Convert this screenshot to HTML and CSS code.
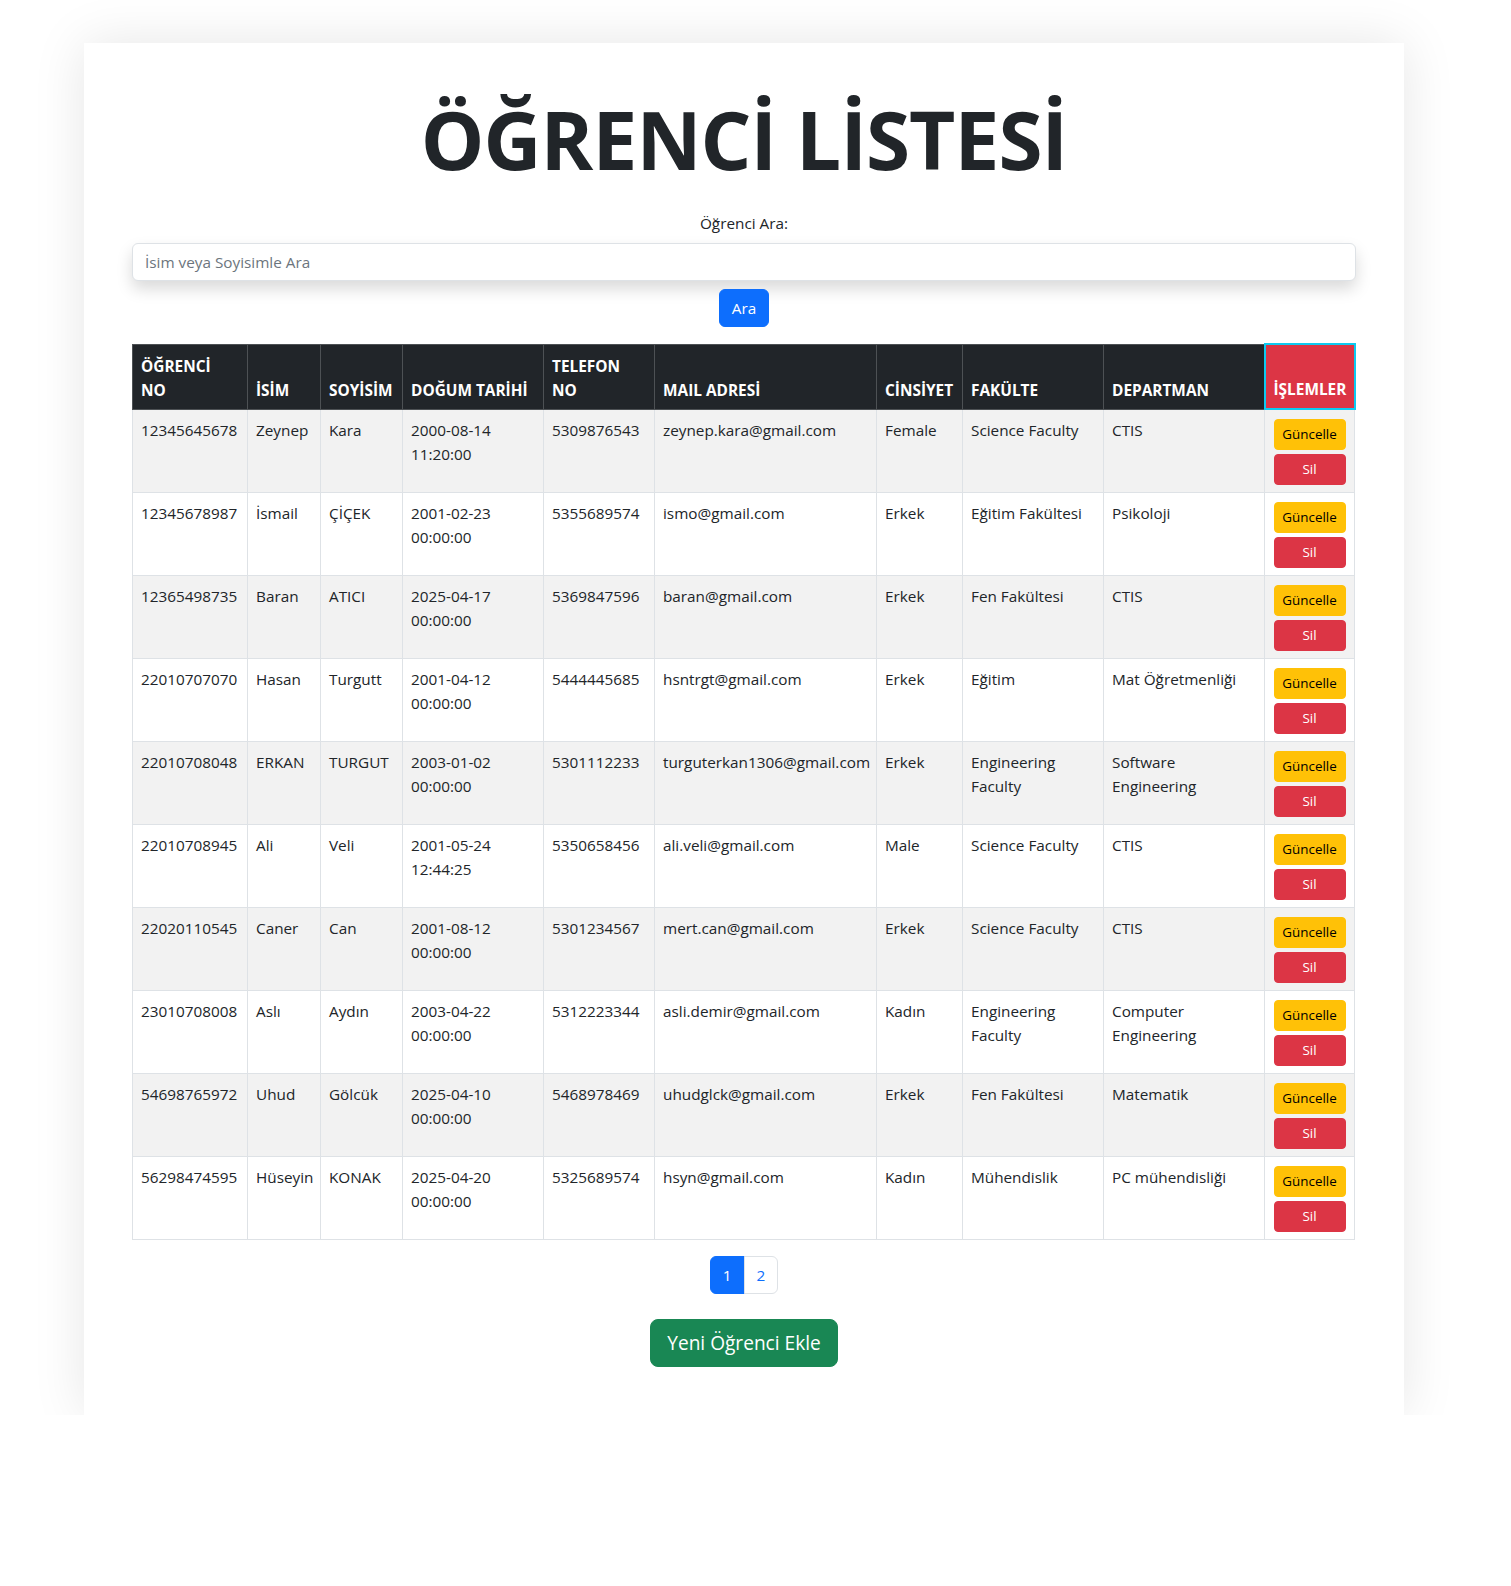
FILE: index.html
```html
<!DOCTYPE html>
<html lang="tr">
<head>
<meta charset="utf-8">
<title>Öğrenci Listesi</title>
<link rel="stylesheet" href="styles.css">
</head>
<body>
<div class="page">
  <main class="container">
    <h1 class="title">ÖĞRENCİ LİSTESİ</h1>

    <form class="search">
      <label class="search-label" for="q">Öğrenci Ara:</label>
      <input id="q" class="search-input" type="text" placeholder="İsim veya Soyisimle Ara">
      <div class="search-actions">
        <button type="button" class="btn btn-primary">Ara</button>
      </div>
    </form>

    <table class="students">
      <colgroup>
        <col class="c-no"><col class="c-name"><col class="c-surname"><col class="c-date"><col class="c-phone">
        <col class="c-mail"><col class="c-gender"><col class="c-faculty"><col class="c-dept"><col class="c-actions">
      </colgroup>
      <thead>
        <tr>
          <th>ÖĞRENCİ<br>NO</th>
          <th>İSİM</th>
          <th>SOYİSİM</th>
          <th>DOĞUM TARİHİ</th>
          <th>TELEFON<br>NO</th>
          <th>MAIL ADRESİ</th>
          <th>CİNSİYET</th>
          <th>FAKÜLTE</th>
          <th>DEPARTMAN</th>
          <th class="th-actions">İŞLEMLER</th>
        </tr>
      </thead>
      <tbody>
        <tr><td>12345645678</td><td>Zeynep</td><td>Kara</td><td>2000-08-14 11:20:00</td><td>5309876543</td><td>zeynep.kara@gmail.com</td><td>Female</td><td>Science Faculty</td><td>CTIS</td>
          <td class="td-actions"><div class="btn-stack"><button class="btn-sm btn-warning">Güncelle</button><button class="btn-sm btn-danger">Sil</button></div></td></tr>
        <tr><td>12345678987</td><td>İsmail</td><td>ÇİÇEK</td><td>2001-02-23 00:00:00</td><td>5355689574</td><td>ismo@gmail.com</td><td>Erkek</td><td>Eğitim Fakültesi</td><td>Psikoloji</td>
          <td class="td-actions"><div class="btn-stack"><button class="btn-sm btn-warning">Güncelle</button><button class="btn-sm btn-danger">Sil</button></div></td></tr>
        <tr><td>12365498735</td><td>Baran</td><td>ATICI</td><td>2025-04-17 00:00:00</td><td>5369847596</td><td>baran@gmail.com</td><td>Erkek</td><td>Fen Fakültesi</td><td>CTIS</td>
          <td class="td-actions"><div class="btn-stack"><button class="btn-sm btn-warning">Güncelle</button><button class="btn-sm btn-danger">Sil</button></div></td></tr>
        <tr><td>22010707070</td><td>Hasan</td><td>Turgutt</td><td>2001-04-12 00:00:00</td><td>5444445685</td><td>hsntrgt@gmail.com</td><td>Erkek</td><td>Eğitim</td><td>Mat Öğretmenliği</td>
          <td class="td-actions"><div class="btn-stack"><button class="btn-sm btn-warning">Güncelle</button><button class="btn-sm btn-danger">Sil</button></div></td></tr>
        <tr><td>22010708048</td><td>ERKAN</td><td>TURGUT</td><td>2003-01-02 00:00:00</td><td>5301112233</td><td>turguterkan1306@gmail.com</td><td>Erkek</td><td>Engineering Faculty</td><td>Software Engineering</td>
          <td class="td-actions"><div class="btn-stack"><button class="btn-sm btn-warning">Güncelle</button><button class="btn-sm btn-danger">Sil</button></div></td></tr>
        <tr><td>22010708945</td><td>Ali</td><td>Veli</td><td>2001-05-24 12:44:25</td><td>5350658456</td><td>ali.veli@gmail.com</td><td>Male</td><td>Science Faculty</td><td>CTIS</td>
          <td class="td-actions"><div class="btn-stack"><button class="btn-sm btn-warning">Güncelle</button><button class="btn-sm btn-danger">Sil</button></div></td></tr>
        <tr><td>22020110545</td><td>Caner</td><td>Can</td><td>2001-08-12 00:00:00</td><td>5301234567</td><td>mert.can@gmail.com</td><td>Erkek</td><td>Science Faculty</td><td>CTIS</td>
          <td class="td-actions"><div class="btn-stack"><button class="btn-sm btn-warning">Güncelle</button><button class="btn-sm btn-danger">Sil</button></div></td></tr>
        <tr><td>23010708008</td><td>Aslı</td><td>Aydın</td><td>2003-04-22 00:00:00</td><td>5312223344</td><td>asli.demir@gmail.com</td><td>Kadın</td><td>Engineering Faculty</td><td>Computer Engineering</td>
          <td class="td-actions"><div class="btn-stack"><button class="btn-sm btn-warning">Güncelle</button><button class="btn-sm btn-danger">Sil</button></div></td></tr>
        <tr><td>54698765972</td><td>Uhud</td><td>Gölcük</td><td>2025-04-10 00:00:00</td><td>5468978469</td><td>uhudglck@gmail.com</td><td>Erkek</td><td>Fen Fakültesi</td><td>Matematik</td>
          <td class="td-actions"><div class="btn-stack"><button class="btn-sm btn-warning">Güncelle</button><button class="btn-sm btn-danger">Sil</button></div></td></tr>
        <tr><td>56298474595</td><td>Hüseyin</td><td>KONAK</td><td>2025-04-20 00:00:00</td><td>5325689574</td><td>hsyn@gmail.com</td><td>Kadın</td><td>Mühendislik</td><td>PC mühendisliği</td>
          <td class="td-actions"><div class="btn-stack"><button class="btn-sm btn-warning">Güncelle</button><button class="btn-sm btn-danger">Sil</button></div></td></tr>
      </tbody>
    </table>

    <nav class="pager">
      <ul class="pagination">
        <li><a class="page-link active" href="#">1</a></li>
        <li><a class="page-link" href="#">2</a></li>
      </ul>
    </nav>

    <div class="add-row">
      <a class="btn-add" href="#">Yeni Öğrenci Ekle</a>
    </div>
  </main>
</div>
</body>
</html>
```
FILE: styles.css
```css
html, body {
  margin: 0;
  background: #fff;
}

body {
  font-family: "Open Sans", "Noto Sans", sans-serif;
  font-size: 15.3px;
  line-height: 24px;
  color: #212529;
}

.page {
  padding: 43px 23px 172px 0;
}

.container {
  width: 1320px;
  box-sizing: border-box;
  margin: 0 auto;
  padding: 48px;
  background: #fff;
  box-shadow: 0 0 50px rgba(0, 0, 0, 0.1);
  clip-path: inset(-90px -90px 0 -90px);
}

.title {
  margin: 0 0 24px;
  font-size: 80px;
  line-height: 96px;
  font-weight: 700;
  letter-spacing: -0.9px;
  text-align: center;
  color: #212529;
}

.search {
  margin: 0;
}

.search-label {
  display: block;
  text-align: center;
  margin-bottom: 8px;
}

.search-input {
  display: block;
  width: 100%;
  box-sizing: border-box;
  height: 38px;
  padding: 6px 12px;
  border: 1px solid #dee2e6;
  border-radius: 6px;
  font-family: inherit;
  font-size: 15.3px;
  line-height: 24px;
  color: #212529;
  background: #fff;
  box-shadow: 0 8px 16px rgba(0, 0, 0, 0.15);
  outline: none;
}

.search-input::placeholder {
  color: #6c757d;
}

.search-actions {
  display: flex;
  justify-content: center;
  margin-top: 8px;
}

.btn {
  font-family: inherit;
  font-size: 15.3px;
  line-height: 24px;
  padding: 6px 12px;
  border-radius: 6px;
  cursor: pointer;
}

.btn-primary {
  background: #0d6efd;
  border: 1px solid #0d6efd;
  color: #fff;
}

.students {
  width: 1222px;
  margin: 16px 0 16px;
  border-collapse: collapse;
  table-layout: fixed;
}

.c-no { width: 115px; }
.c-name { width: 73px; }
.c-surname { width: 82px; }
.c-date { width: 141px; }
.c-phone { width: 111px; }
.c-mail { width: 222px; }
.c-gender { width: 86px; }
.c-faculty { width: 141px; }
.c-dept { width: 161px; }
.c-actions { width: 90px; }

.students th,
.students td {
  padding: 8px;
  border: 1px solid #dee2e6;
  text-align: left;
}

.students th {
  padding: 10px 8px 6px;
  background: #212529;
  color: #fff;
  border-color: #4d5154;
  font-weight: 700;
  font-size: 15.4px;
  line-height: 24px;
  vertical-align: bottom;
  white-space: nowrap;
}

.students th.th-actions {
  background: #dc3545;
  border: 2px solid #0dcaf0;
}

.students td {
  vertical-align: top;
}

.students td.td-actions {
  padding: 9px 8px 7px;
}

.students tbody tr:nth-child(odd) td {
  background: #f2f2f2;
}

.btn-stack {
  display: flex;
  flex-direction: column;
  align-items: center;
  gap: 4px;
}

.btn-sm {
  width: 72px;
  box-sizing: border-box;
  padding: 4px 0;
  font-family: inherit;
  font-size: 13.4px;
  line-height: 21px;
  border-radius: 4px;
  border: 1px solid transparent;
  cursor: pointer;
}

.btn-warning {
  background: #ffc107;
  border-color: #ffc107;
  color: #000;
}

.btn-danger {
  background: #dc3545;
  border-color: #dc3545;
  color: #fff;
}

.pager {
  display: flex;
  justify-content: center;
}

.pagination {
  display: flex;
  list-style: none;
  margin: 0 0 16px;
  padding: 0;
}

.page-link {
  display: block;
  padding: 6px 12px;
  border: 1px solid #dee2e6;
  color: #0d6efd;
  background: #fff;
  text-decoration: none;
  line-height: 24px;
}

.pagination li:first-child .page-link {
  border-radius: 6px 0 0 6px;
}

.pagination li:last-child .page-link {
  border-radius: 0 6px 6px 0;
  margin-left: -1px;
}

.page-link.active {
  background: #0d6efd;
  border-color: #0d6efd;
  color: #fff;
}

.add-row {
  display: flex;
  justify-content: center;
  margin-top: 9px;
}

.btn-add {
  display: inline-block;
  padding: 8px 16px;
  font-size: 19.1px;
  line-height: 30px;
  border-radius: 8px;
  border: 1px solid #198754;
  background: #198754;
  color: #fff;
  text-decoration: none;
}
```
